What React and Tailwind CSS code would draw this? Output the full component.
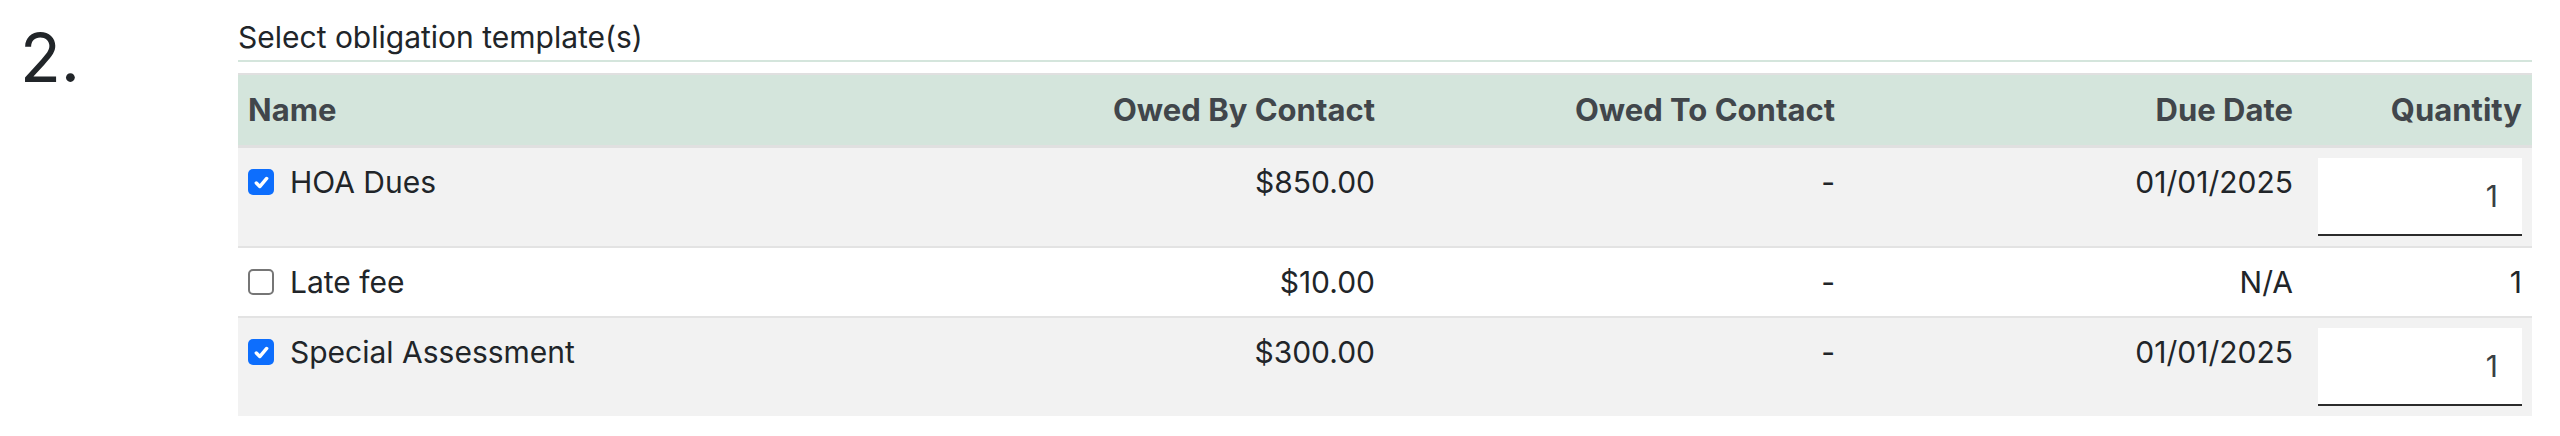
import React from 'react';

const rows = [
    { name: 'HOA Dues', checked: true, owedBy: '$850.00', owedTo: '-', due: '01/01/2025', qty: '1', editable: true },
    { name: 'Late fee', checked: false, owedBy: '$10.00', owedTo: '-', due: 'N/A', qty: '1', editable: false },
    { name: 'Special Assessment', checked: true, owedBy: '$300.00', owedTo: '-', due: '01/01/2025', qty: '1', editable: true },
];

const Checkbox = ({ checked }) => (
    checked ? (
        <span className="w-[26px] h-[26px] shrink-0 rounded-[5px] bg-[#0d6efd] flex items-center justify-center">
            <svg viewBox="0 0 20 20" className="w-[23px] h-[23px]">
                <path d="M5.5 10.5l3 3 6-7" fill="none" stroke="#fff" strokeWidth="3" strokeLinecap="round" strokeLinejoin="round" />
            </svg>
        </span>
    ) : (
        <span className="w-[26px] h-[26px] shrink-0 rounded-[5px] bg-white border-2 border-[#767676]" />
    )
);

export default function App() {
    return (
        <div className="w-[2560px] h-[436px] bg-white flex font-['Inter',sans-serif] text-[#212529]">
            <div className="w-[238px] shrink-0 pl-[20px] pt-[24px] text-[67px] leading-none">2.</div>

            <div className="flex-1 pr-[28px] pt-[15px]">
                <div className="text-[30px] leading-[45px] border-b-2 border-[#d4e5dc]">Select obligation template(s)</div>

                <table className="mt-[11px] w-full table-fixed border-collapse">
                    <colgroup>
                        <col />
                        <col className="w-[458px]" />
                        <col className="w-[460px]" />
                        <col className="w-[458px]" />
                        <col className="w-[229px]" />
                    </colgroup>
                    <thead>
                        <tr className="bg-[#d4e5dc] border-t-2 border-b-[3px] border-[#e0e0e0] text-[31px] leading-[48px] font-bold text-[#41464b]">
                            <th className="px-[10px] py-[11px] text-left">Name</th>
                            <th className="px-[10px] py-[11px] text-right">Owed By Contact</th>
                            <th className="px-[10px] py-[11px] text-right">Owed To Contact</th>
                            <th className="px-[10px] py-[11px] text-right">Due Date</th>
                            <th className="px-[10px] py-[11px] text-right">Quantity</th>
                        </tr>
                    </thead>
                    <tbody className="text-[30px] leading-[48px]">
                        {rows.map((r, i) => (
                            <tr key={i} className={`${i % 2 === 0 ? 'bg-[#f2f2f2]' : 'bg-white'} ${i < rows.length - 1 ? 'border-b-2 border-[#e3e3e3]' : ''}`}>
                                <td className="p-[10px] align-top">
                                    <div className="flex items-center gap-[16px]">
                                        <Checkbox checked={r.checked} />
                                        <span>{r.name}</span>
                                    </div>
                                </td>
                                <td className="p-[10px] align-top text-right">{r.owedBy}</td>
                                <td className="p-[10px] align-top text-right">{r.owedTo}</td>
                                <td className="p-[10px] align-top text-right">{r.due}</td>
                                <td className="p-[10px] align-top text-right">
                                    {r.editable ? (
                                        <input
                                            type="text"
                                            defaultValue={r.qty}
                                            className="block ml-auto w-[204px] h-[78px] bg-white border-b-2 border-[#2b2b2b] text-right pr-[24px] text-[30px] text-[#3a3f44] outline-none"
                                        />
                                    ) : (
                                        r.qty
                                    )}
                                </td>
                            </tr>
                        ))}
                    </tbody>
                </table>
            </div>
        </div>
    );
}
